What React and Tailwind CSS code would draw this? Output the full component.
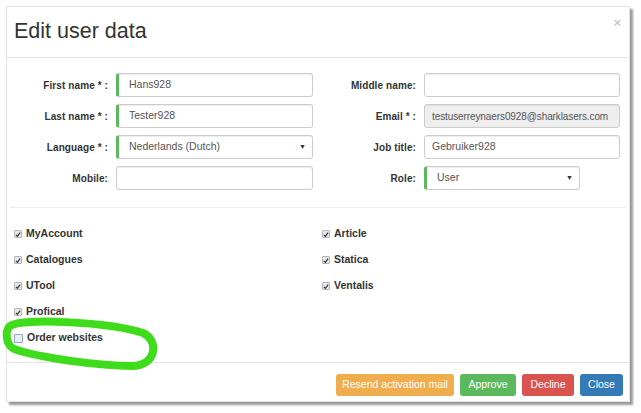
import React from "react";

const font = { fontFamily: '"Liberation Sans", Arial, sans-serif' };

/* small helpers */
function Label({ children, w }) {
    return (
        <div className={`${w} shrink-0 text-right text-[10px] tracking-[0.1px] font-bold text-[#333] pr-[8px]`}>
            {children}
        </div>
    );
}

function Field({ value = "", w = "w-[197px]", size = "text-[10.5px]", required, disabled, select }) {
    return (
        <div
            className={`${w} h-[24px] shrink-0 flex items-center rounded-[3px] border border-[#ccc] shadow-[inset_0_1px_1px_rgba(0,0,0,0.075)] ${size} text-[#555] ${
                required ? "border-l-[3px] border-l-[#5cb85c] pl-[10px]" : "pl-[7px]"
            } ${disabled ? "bg-[#eee]" : "bg-white"}`}
        >
            <span className="flex-1 whitespace-nowrap">{value}</span>
            {select && <span className="text-[7px] text-[#333] pr-[6px]">▼</span>}
        </div>
    );
}

function Check({ label, checked = true }) {
    return (
        <div className="flex items-center h-[26px]">
            {checked ? (
                <span className="w-[8px] h-[8px] rounded-[1px] border border-[#b5b5b5] bg-[#e9e9e9] flex items-center justify-center">
                    <svg width="7" height="7" viewBox="0 0 10 10">
                        <path d="M1.5 5.5 L4 8 L8.5 2" fill="none" stroke="#333" strokeWidth="2" />
                    </svg>
                </span>
            ) : (
                <span className="w-[9px] h-[9px] rounded-[1px] border border-[#8fa9c9] bg-[#e8eef6]" />
            )}
            <span className="ml-[4px] text-[10.5px] font-bold text-[#333]">{label}</span>
        </div>
    );
}

function Btn({ children, color, w }) {
    return (
        <div className={`${w} h-[22px] rounded-[3px] ${color} text-white text-[10.5px] flex items-center justify-center`}>
            {children}
        </div>
    );
}

export default function App() {
    return (
        <div className="relative w-[641px] h-[413px] bg-white overflow-hidden" style={font}>
            {/* modal */}
            <div className="absolute left-[6px] top-[6px] w-[624px] h-[396px] bg-white border border-[#e3e3e3] shadow-[3px_3px_2px_rgba(0,0,0,0.4)] flex flex-col">
                {/* header */}
                <div className="relative h-[51px] shrink-0 border-b border-[#e5e5e5] pl-[7px] pt-[11px]">
                    <h1 className="text-[21.5px] leading-[26px] text-[#333]">Edit user data</h1>
                    <span className="absolute right-[8px] top-[6px] text-[13px] font-bold text-[#c9c9c9]">×</span>
                </div>

                {/* form rows */}
                <div className="pt-[15px] flex flex-col gap-[7px]">
                    <div className="flex items-center">
                        <Label w="w-[109px]">First name * :</Label>
                        <Field value="Hans928" required />
                        <Label w="w-[111px]">Middle name:</Label>
                        <Field w="w-[196px]" />
                    </div>
                    <div className="flex items-center">
                        <Label w="w-[109px]">Last name * :</Label>
                        <Field value="Tester928" required />
                        <Label w="w-[111px]">Email * :</Label>
                        <Field
                            w="w-[196px]"
                            size="text-[10px] tracking-[-0.1px]"
                            value="testuserreynaers0928@sharklasers.com"
                            disabled
                        />
                    </div>
                    <div className="flex items-center">
                        <Label w="w-[109px]">Language * :</Label>
                        <Field value="Nederlands (Dutch)" required select />
                        <Label w="w-[111px]">Job title:</Label>
                        <Field w="w-[196px]" value="Gebruiker928" />
                    </div>
                    <div className="flex items-center">
                        <Label w="w-[109px]">Mobile:</Label>
                        <Field />
                        <Label w="w-[111px]">Role:</Label>
                        <Field w="w-[156px]" value="User" required select />
                    </div>
                </div>

                <div className="mt-[17px] mx-[3px] border-t border-[#eee]" />

                {/* modules */}
                <div className="pt-[13px] pl-[7px] flex">
                    <div className="w-[308px] flex flex-col">
                        <Check label="MyAccount" />
                        <Check label="Catalogues" />
                        <Check label="UTool" />
                        <Check label="Profical" />
                        <Check label="Order websites" checked={false} />
                    </div>
                    <div className="flex flex-col">
                        <Check label="Article" />
                        <Check label="Statica" />
                        <Check label="Ventalis" />
                    </div>
                </div>

                {/* footer */}
                <div className="mt-auto h-[39px] border-t border-[#e5e5e5] flex items-start justify-end gap-[6px] pt-[11px] pr-[6px]">
                    <Btn color="bg-[#f0ad4e]" w="w-[118px]">Resend activation mail</Btn>
                    <Btn color="bg-[#5cb85c]" w="w-[56px]">Approve</Btn>
                    <Btn color="bg-[#d9534f]" w="w-[52px]">Decline</Btn>
                    <Btn color="bg-[#337ab7]" w="w-[43px]">Close</Btn>
                </div>
            </div>

            {/* green annotation loop */}
            <svg className="absolute left-0 top-0 pointer-events-none" width="641" height="413">
                <path
                    d="M9 327 C 16 317, 110 322, 143 333 C 159 340, 157 366, 132 366 C 100 366, 40 358, 14 349 C 6 345, 5 332, 9 327"
                    fill="none"
                    stroke="#3fdc1c"
                    strokeWidth="8"
                    strokeLinecap="round"
                />
            </svg>
        </div>
    );
}
